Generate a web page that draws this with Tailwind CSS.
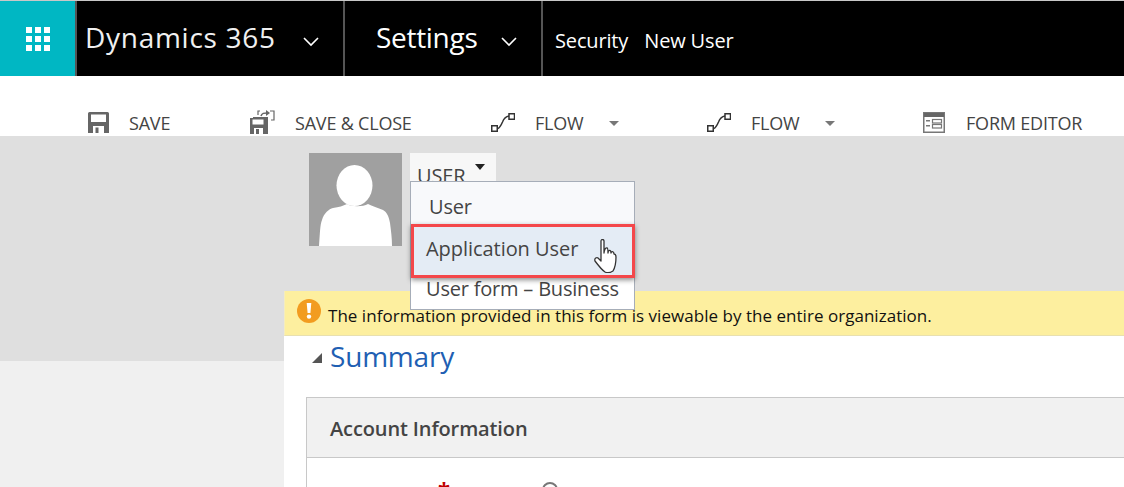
<!DOCTYPE html>
<html>
<head>
<meta charset="utf-8">
<script src="https://cdn.jsdelivr.net/npm/@tailwindcss/browser@4"></script>
</head>
<body class="m-0 bg-white overflow-hidden font-['Open_Sans','Noto_Sans',sans-serif]">
<div class="relative w-[1124px] h-[487px] overflow-hidden flex flex-col">
  <header class="h-[76px] shrink-0 bg-black border-t border-[#c8c8c8] flex text-white">
    <div class="w-[75px] bg-[#00b7c3] flex items-center justify-center">
      <svg width="24" height="24" viewBox="0 0 24 24" fill="#fff"><rect x="0" y="0" width="6" height="6"/><rect x="9" y="0" width="6" height="6"/><rect x="18" y="0" width="6" height="6"/><rect x="0" y="9" width="6" height="6"/><rect x="9" y="9" width="6" height="6"/><rect x="18" y="9" width="6" height="6"/><rect x="0" y="18" width="6" height="6"/><rect x="9" y="18" width="6" height="6"/><rect x="18" y="18" width="6" height="6"/></svg>
    </div>
    <div class="w-[270px] border-x-2 border-[#555] flex items-center pl-[8px]">
      <span class="text-[28px] leading-none tracking-[0.72px] text-[#f0f0f0] font-normal mb-[4px]">Dynamics 365</span>
      <svg class="ml-[27px] mt-[6px]" width="16" height="10" viewBox="0 0 16 10" fill="none" stroke="#fff" stroke-width="1.6"><path d="M1 1l7 7 7-7"/></svg>
    </div>
    <div class="w-[198px] border-r-2 border-[#555] flex items-center pl-[31px]">
      <span class="text-[28px] leading-none tracking-[-0.3px] font-normal mb-[4px]">Settings</span>
      <svg class="ml-[24px] mt-[6px]" width="16" height="10" viewBox="0 0 16 10" fill="none" stroke="#fff" stroke-width="1.6"><path d="M1 1l7 7 7-7"/></svg>
    </div>
    <div class="flex items-center pl-[12px] gap-[16px] text-[20px] leading-none tracking-[-0.15px] pt-[5px]">
      <span>Security</span><span>New User</span>
    </div>
  </header>

  <nav class="h-[60px] shrink-0 bg-white flex items-end pb-[1px] text-[18px] leading-[24px] tracking-[-0.2px] text-[#444]">
    <div class="ml-[88px] w-[162px] flex items-center">
      <svg class="mb-[1px]" width="21" height="21" viewBox="0 0 21 21"><path fill="#666" d="M0 1.5A1.5 1.5 0 0 1 1.5 0h18A1.5 1.5 0 0 1 21 1.5V21H0z"/><rect x="3" y="2.5" width="15" height="7.5" fill="#fff"/><rect x="5" y="14" width="11" height="7" fill="#fff"/><rect x="7.5" y="15.5" width="3" height="5.5" fill="#666"/></svg>
      <span class="ml-[20px] w-[120px]">SAVE</span>
    </div>
    <div class="w-[241px] flex items-center">
      <svg class="mb-[1px]" width="25" height="24" viewBox="0 0 25 24" fill="none"><path fill="#666" d="M0 8h3v-1h15v17H0z"/><rect x="2.5" y="9.5" width="11" height="5" fill="#fff"/><rect x="4" y="18" width="9" height="6" fill="#fff"/><rect x="6" y="19" width="3" height="5" fill="#666"/><path stroke="#666" stroke-width="1.2" d="M8 5V1h2M20 1h4v9h-3"/><path stroke="#666" stroke-width="1.6" d="M11 6c1-3 3-3 6-3"/><path fill="#666" d="M16 0l4 3-4 3z"/></svg>
      <span class="ml-[20px]">SAVE &amp; CLOSE</span>
    </div>
    <div class="w-[216px] flex items-center">
      <svg class="mb-[2px]" width="24" height="19" viewBox="0 0 24 19" fill="none" stroke="#333" stroke-width="1.5"><rect x="0.75" y="12.75" width="5.5" height="5.5" fill="#fff"/><rect x="18" y="0.75" width="5.5" height="5.5" fill="#fff"/><path d="M7 15.5c2-1 3-3 4.500-6.500 1.500-4 3-5.500 6.500-6"/></svg>
      <span class="ml-[20px]">FLOW</span>
      <span class="ml-[25px] mt-[1px] border-x-[5px] border-x-transparent border-t-[5px] border-t-[#777]"></span>
    </div>
    <div class="w-[216px] flex items-center">
      <svg class="mb-[2px]" width="24" height="19" viewBox="0 0 24 19" fill="none" stroke="#333" stroke-width="1.5"><rect x="0.75" y="12.75" width="5.5" height="5.5" fill="#fff"/><rect x="18" y="0.75" width="5.5" height="5.5" fill="#fff"/><path d="M7 15.5c2-1 3-3 4.500-6.500 1.500-4 3-5.500 6.500-6"/></svg>
      <span class="ml-[20px]">FLOW</span>
      <span class="ml-[25px] mt-[1px] border-x-[5px] border-x-transparent border-t-[5px] border-t-[#777]"></span>
    </div>
    <div class="flex items-center">
      <svg class="mb-[1px]" width="22" height="21" viewBox="0 0 22 21"><rect x="0.75" y="0.75" width="20.5" height="19.5" fill="#fff" stroke="#777" stroke-width="1.5"/><rect x="1" y="1" width="20" height="4" fill="#666"/><path fill="#777" d="M3 8h4v1.500H3zM3 13h4v1.500H3z"/><rect x="9.500" y="7.500" width="9" height="3.500" fill="none" stroke="#777" stroke-width="1.200"/><rect x="9.500" y="12.500" width="9" height="3.500" fill="none" stroke="#777" stroke-width="1.200"/></svg>
      <span class="ml-[21px]">FORM EDITOR</span>
    </div>
  </nav>

  <main class="flex-1 flex min-h-0">
    <aside class="w-[284px] shrink-0 flex flex-col">
      <div class="h-[225px] bg-[#dfdfdf]"></div>
      <div class="flex-1 bg-[#f0f0f0]"></div>
    </aside>
    <section class="flex-1 flex flex-col min-w-0">
      <div class="h-[155px] shrink-0 bg-[#dfdfdf] flex items-start pt-[17px] pl-[25px]">
        <div class="w-[93px] h-[93px] bg-[#a0a0a0] flex items-end justify-center overflow-hidden">
          <svg width="93" height="93" viewBox="0 0 93 93" fill="#fff"><ellipse cx="45.500" cy="32.500" rx="18" ry="20.500"/><path d="M10 93C11 80 11 72 13 67 15 60 20 56 24 55 30 54 34 53 38 51 42 54 54 54 59 51 63 53 69 55 74 57 78 59 80 64 81 70 82 78 83 85 83 93z"/></svg>
        </div>
        <div class="ml-[8px] w-[86px] h-[40px] bg-[#f7f7f7] pl-[7px] relative overflow-hidden">
          <span class="block text-[20px] leading-[46px] tracking-[-0.1px] text-[#444]">USER</span>
          <span class="absolute left-[65px] top-[11px] border-x-[5px] border-x-transparent border-t-[6px] border-t-[#222]"></span>
        </div>
      </div>
      <div class="h-[45px] shrink-0 bg-[#fdef9f] border-b border-[#e8e0b0] flex items-center pl-[12px] border-l border-l-[#f4ecc0]">
        <span class="w-[24px] h-[24px] rounded-full bg-[#f29c20] flex items-center justify-center mb-[4px]">
          <svg width="6" height="16" viewBox="0 0 6 16" fill="#fff"><path d="M.7 0h4.600L4.400 10H1.600z"/><circle cx="3" cy="13.600" r="2.200"/></svg>
        </span>
        <span class="ml-[7px] mt-[4px] text-[17px] leading-none tracking-[0.03px] text-[#111]">The information provided in this form is viewable by the entire organization.</span>
      </div>
      <div class="flex-1 bg-white pl-[22px] min-h-0">
        <div class="h-[61px] flex items-start pt-[4px]">
          <span class="mt-[13px] ml-[6px] border-l-[10px] border-l-transparent border-b-[10px] border-b-[#555]"></span>
          <span class="ml-[8px] text-[28px] leading-[32px] tracking-[-0.2px] text-[#1f5fb3]">Summary</span>
        </div>
        <div class="h-[120px] border border-[#c8c8c8] border-r-0">
          <div class="h-[60px] bg-[#f1f1f1] border-b border-[#c8c8c8] flex items-center pl-[23px] pt-[2px]">
            <span class="text-[20px] leading-none font-semibold tracking-[-0.12px] text-[#444]">Account Information</span>
          </div>
          <div class="relative">
            <span class="absolute left-[131px] top-[20px] text-[#c00000] text-[22px] leading-none font-bold">*</span>
            <span class="absolute left-[235px] top-[24px] w-[16px] h-[16px] rounded-full border-2 border-[#777]"></span>
          </div>
        </div>
      </div>
    </section>
  </main>

  <!-- dropdown overlay -->
  <div class="absolute left-[410px] top-[181px] w-[225px] h-[129px] bg-white border border-[#a6adb8] text-[20px] leading-none tracking-[-0.2px] text-[#444]">
    <div class="h-[42px] bg-[#f8f9fb] pl-[18px] pt-[15px]">User</div>
    <div class="h-[43px]"></div>
    <div class="pl-[15px] pt-[12px]">User form – Business</div>
  </div>
  <div class="absolute left-[411px] top-[224px] w-[224px] h-[54px] bg-[#e4ecf5] border-[3px] border-[#f4474a] shadow-[0_2px_5px_rgba(0,0,0,0.45)] text-[20px] leading-none tracking-[-0.05px] text-[#444] pl-[12px] pt-[12px]">Application User
    <svg class="absolute left-[179px] top-[12px]" width="26" height="34" viewBox="0 0 26 34" fill="#fff" stroke="#333" stroke-width="1.300" stroke-linejoin="round"><path d="M8 2c0-2 3-2 3 0v12c0-1 1-6 3-5 1 0 1 2 1 5 0-3 3-4 3 0 0-2 3-2 3 1 1 0 2 1 2 3 0 4 0 9-3 14-3 2-6 2-8 1-3-2-7-7-10-11-1-3 2-4 3-3l3 3z"/></svg>
  </div>
</div>
</body>
</html>
